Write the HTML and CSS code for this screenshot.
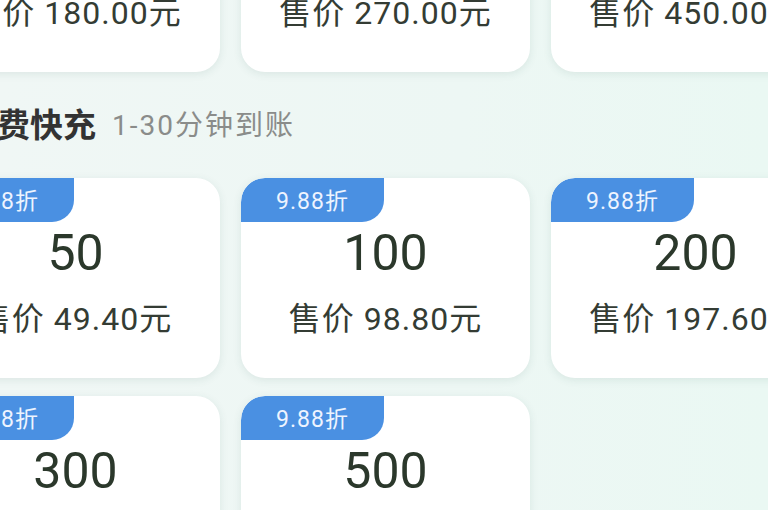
FILE: index.html
```html
<!DOCTYPE html>
<html lang="zh-CN">
<head>
<meta charset="utf-8">
<link rel="stylesheet" href="styles.css">
</head>
<body>
<div class="viewport">
  <div class="page">
    <div class="grid">
      <div class="card"><div class="spacer"></div><div class="amount">200</div><div class="price">售价 180.00元</div></div>
      <div class="card"><div class="spacer"></div><div class="amount">300</div><div class="price">售价 270.00元</div></div>
      <div class="card"><div class="spacer"></div><div class="amount">500</div><div class="price">售价 450.00元</div></div>
    </div>
    <div class="section-head">
      <h2 class="title">话费快充</h2>
      <span class="subtitle">1-30分钟到账</span>
    </div>
    <div class="grid">
      <div class="card"><div class="badge">9.88折</div><div class="amount">50</div><div class="price">售价 49.40元</div></div>
      <div class="card"><div class="badge">9.88折</div><div class="amount">100</div><div class="price">售价 98.80元</div></div>
      <div class="card"><div class="badge">9.88折</div><div class="amount">200</div><div class="price">售价 197.60元</div></div>
      <div class="card"><div class="badge">9.88折</div><div class="amount">300</div><div class="price">售价 296.40元</div></div>
      <div class="card"><div class="badge">9.88折</div><div class="amount">500</div><div class="price">售价 494.00元</div></div>
    </div>
  </div>
</div>
</body>
</html>
```

FILE: styles.css
```css
html, body {
  margin: 0;
  padding: 0;
}
body {
  width: 768px;
  height: 510px;
  overflow: hidden;
  background: linear-gradient(90deg, #f0f7f5 0%, #edf7f4 60%, #eaf8f3 100%);
  font-family: Roboto, "Noto Sans CJK SC", sans-serif;
}
.viewport {
  width: 768px;
  height: 510px;
  overflow: hidden;
}
.page {
  margin-left: -69px;
  margin-top: -128px;
  width: 909px;
}
.grid {
  display: grid;
  grid-template-columns: repeat(3, 289px);
  column-gap: 21px;
  row-gap: 18px;
}
.card {
  height: 200px;
  background: #fff;
  border-radius: 24px;
  box-shadow: 0 2px 8px rgba(40, 90, 80, 0.10);
  display: flex;
  flex-direction: column;
  align-items: center;
  overflow: hidden;
}
.badge, .spacer {
  align-self: flex-start;
  width: 143px;
  height: 44px;
  box-sizing: border-box;
  display: flex;
  align-items: center;
  justify-content: center;
  padding-bottom: 3px;
  font-size: 23px;
  letter-spacing: 1px;
  color: #eef4ff;
}
.badge {
  background: #4a90e2;
  border-radius: 24px 0 22px 0;
}
.amount {
  margin-top: 6px;
  font-size: 50px;
  line-height: 50px;
  color: #2b382b;
}
.price {
  margin-top: 23px;
  font-size: 32px;
  line-height: 36px;
  color: #343c34;
  letter-spacing: 1px;
}
.section-head {
  height: 106px;
  display: flex;
  align-items: center;
  padding-left: 33px;
  padding-bottom: 5px;
  box-sizing: border-box;
}
.title {
  margin: 0;
  font-size: 33px;
  font-weight: bold;
  color: #333;
}
.subtitle {
  margin-left: 16px;
  font-size: 28px;
  letter-spacing: 2px;
  color: #8a8c8a;
}
```
